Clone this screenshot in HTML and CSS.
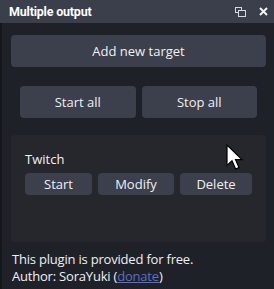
FILE: index.html
```html
<!DOCTYPE html>
<html>
<head>
<meta charset="utf-8">
<link rel="stylesheet" href="styles.css">
</head>
<body>
<div class="dock">
  <div class="titlebar">
    <span class="title">Multiple output</span>
    <div class="title-icons">
      <svg class="ico-float" width="11" height="10" viewBox="0 0 11 10"><rect x="0.5" y="0.5" width="6" height="5" fill="none" stroke="#d8d9de"/><rect x="3.5" y="3.5" width="7" height="6" fill="#3b3e4b" stroke="#d8d9de"/></svg>
      <svg class="ico-close" width="9" height="9" viewBox="0 0 9 9"><path d="M1 1L8 8M8 1L1 8" stroke="#f2f2f4" stroke-width="2"/></svg>
    </div>
  </div>
  <div class="content">
    <button class="btn btn-add">Add new target</button>
    <div class="row-all">
      <button class="btn btn-big">Start all</button>
      <button class="btn btn-big">Stop all</button>
    </div>
    <div class="group">
      <div class="target-name">Twitch</div>
      <div class="target-btns">
        <button class="btn btn-sm w-start">Start</button>
        <button class="btn btn-sm w-modify">Modify</button>
        <button class="btn btn-sm w-delete">Delete</button>
      </div>
    </div>
    <div class="footer">
      <p class="line">This plugin is provided for free.</p>
      <p class="line">Author: SoraYuki (<a class="link" href="#">donate</a>)</p>
    </div>
  </div>
</div>
<svg class="cursor" width="18" height="27" viewBox="0 0 18 27"><path d="M1 1L1 21.5L6 16.8L9.6 25L13 23.6L9.5 15.6L16 15.6Z" fill="#fff" stroke="#000" stroke-width="1.2" stroke-linejoin="miter"/></svg>
</body>
</html>
```
FILE: styles.css
```css
html, body {
  margin: 0;
  padding: 0;
  background: #1f2129;
}
body {
  width: 274px;
  height: 289px;
  overflow: hidden;
  font-family: "Open Sans", "Noto Sans", sans-serif;
  font-size: 13px;
  color: #f0f0f2;
  position: relative;
}
.dock {
  display: flex;
  flex-direction: column;
  height: 289px;
}
.titlebar {
  height: 23px;
  background: #3b3e4b;
  display: flex;
  align-items: center;
  justify-content: space-between;
  padding: 0 6px 0 9px;
  flex: none;
}
.title {
  font-family: Roboto, "Open Sans", sans-serif;
  font-weight: 700;
  font-size: 12.5px;
  letter-spacing: -0.2px;
  color: #ffffff;
  line-height: 23px;
}
.title-icons {
  display: flex;
  align-items: center;
  gap: 13px;
}
.content {
  flex: 1;
  background: #1f2129;
  border-left: 2px solid #15161b;
  padding: 12px 8px 0 9px;
  display: flex;
  flex-direction: column;
}
.btn {
  font-family: inherit;
  font-size: 13px;
  color: #f0f0f2;
  background: #3c3f4c;
  border: none;
  border-radius: 4px;
  padding: 0;
  margin: 0;
}
.btn-add {
  height: 32px;
  width: 100%;
}
.row-all {
  display: flex;
  gap: 6px;
  padding: 0 9px;
  margin-top: 19px;
}
.btn-big {
  flex: 1;
  height: 32px;
}
.group {
  margin-top: 17px;
  height: 107px;
  background: #26272d;
  border-radius: 4px;
  padding: 0 14px;
  box-sizing: border-box;
}
.target-name {
  margin-top: 14px;
  line-height: 20px;
}
.target-btns {
  display: flex;
  gap: 6px;
  margin-top: 4px;
}
.btn-sm {
  height: 22px;
}
.w-start { width: 67px; }
.w-modify { width: 76px; }
.w-delete { width: 72px; }
.footer {
  margin-top: 9px;
  padding-left: 1px;
  letter-spacing: -0.2px;
}
.line {
  margin: 0;
  line-height: 17px;
}
.link {
  color: #5470d0;
}
.cursor {
  position: absolute;
  left: 226px;
  top: 144px;
}
```
